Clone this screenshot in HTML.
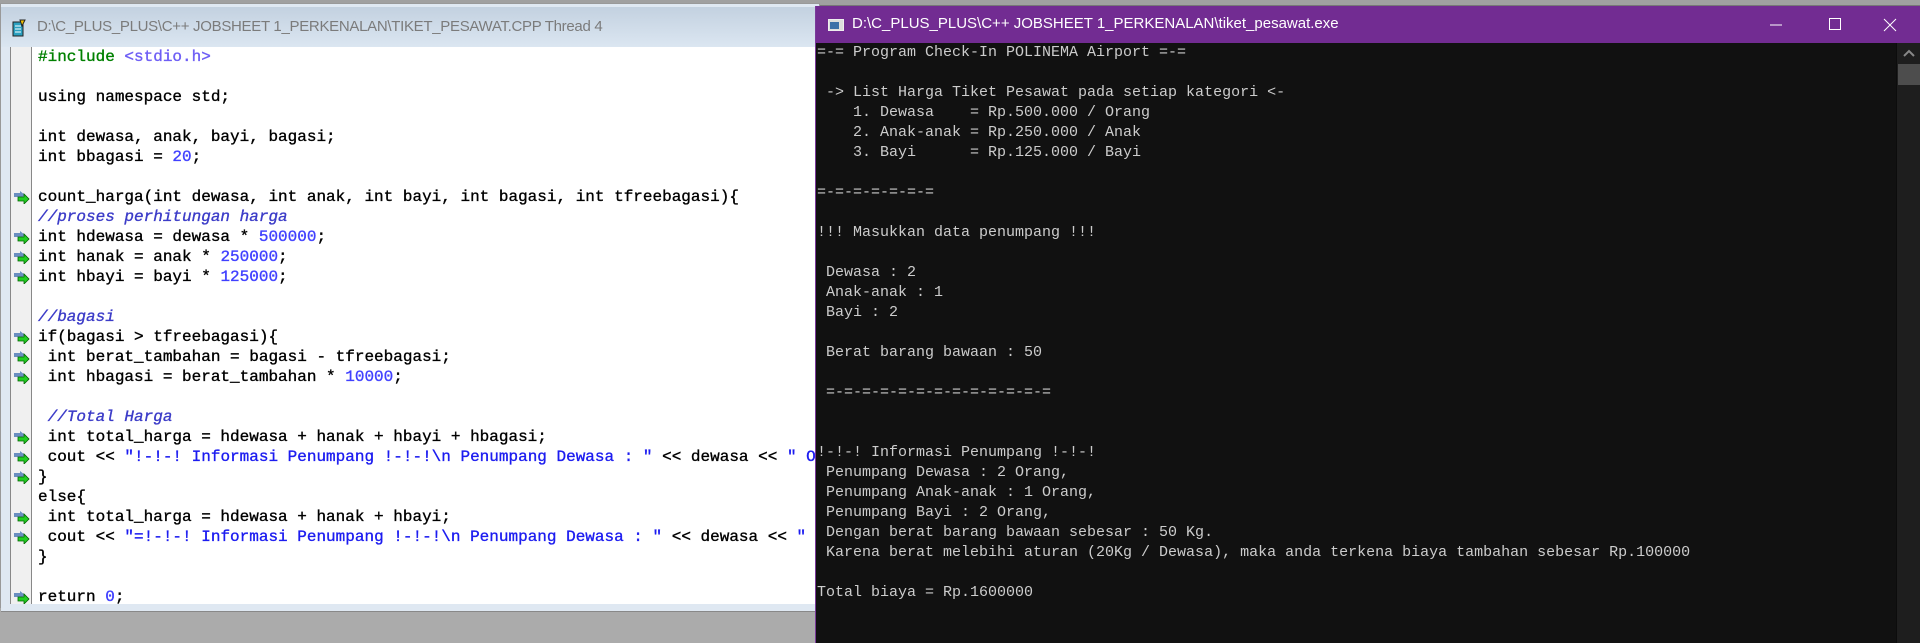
<!DOCTYPE html>
<html><head><meta charset="utf-8"><style>
*{margin:0;padding:0;box-sizing:border-box}
body{width:1920px;height:643px;overflow:hidden;background:#ababab;position:relative;font-family:"Liberation Sans",sans-serif}
#top{position:absolute;left:0;top:0;width:1920px;height:6px;background:#a0a0a0;border-bottom:1px solid #777}
#ed{position:absolute;left:0;top:3px;width:820px;height:605px;background:#dfe8f2;border:1px solid #999}
#edt{position:absolute;left:0;top:3px;width:818px;height:40px;background:linear-gradient(#c3d1e0,#dbe6f1)}
#edt span{position:absolute;left:36px;top:11px;font-size:15px;color:#7b7b7b;letter-spacing:-0.3px}
#code{position:absolute;left:9px;top:43px;width:810px;height:557px;background:#fff;overflow:hidden;border-left:1px solid #888}
#gut{position:absolute;left:0;top:0;width:21px;height:557px;background:#f0f0f0;border-right:1px solid #888}
pre{font-family:"Liberation Mono",monospace}
#code pre{position:absolute;left:27px;top:0;font-size:16px;line-height:20px;color:#000;white-space:pre;-webkit-text-stroke:0.35px}
.pp{color:#008000}.inc{color:#6e5ef5}.n{color:#4040ff}.s{color:#1c1cf0}.c{color:#3c3cc8;font-style:italic}
.ar{position:absolute;left:2px;width:17px;height:14px}
#bar{position:absolute;left:0;top:600px;width:820px;height:8px;background:#dfe8f2;border-bottom:1px solid #888}
#con{position:absolute;left:815px;top:6px;width:1105px;height:637px;background:#0c0c0c;border-left:1px solid #7a3a9a}
#ct{position:absolute;left:0;top:0;width:1105px;height:37px;background:#722c92}
#ct span{position:absolute;left:36px;top:9px;font-size:15px;color:#fff}
#cico{position:absolute;left:12px;top:13px;width:16px;height:12px;background:#ddd;border:1px solid #eee}
#cico:before{content:"";position:absolute;left:1px;top:2px;width:9px;height:7px;background:#3b6fa8}
#cbody{position:absolute;left:0;top:37px;width:1080px;height:600px;background:#111}
#cbody pre{position:absolute;left:1px;top:0;font-size:15px;line-height:20px;color:#cccccc;white-space:pre}
#sb{position:absolute;left:1081px;top:37px;width:24px;height:600px;background:#1e1e1e}
#thumb{position:absolute;left:1px;top:21px;width:22px;height:21px;background:#4d4d4d}
</style></head><body>
<div id="top"></div>
<div id="ed">
<div id="edt"><svg style="position:absolute;left:10px;top:12px" width="16" height="20"><rect x="2" y="3" width="10" height="14" fill="#2aa0c0" stroke="#222"/><path d="M9 1l5 0-3 6z" fill="#f0c000" stroke="#222"/><path d="M4 7h6M4 10h6M4 13h6" stroke="#fff"/></svg><span>D:\C_PLUS_PLUS\C++ JOBSHEET 1_PERKENALAN\TIKET_PESAWAT.CPP Thread 4</span></div>
<div id="code"><div id="gut"></div>
<pre><span class="pp">#include</span> <span class="inc">&lt;stdio.h&gt;</span>

using namespace std;

int dewasa, anak, bayi, bagasi;
int bbagasi = <span class="n">20</span>;

count_harga(int dewasa, int anak, int bayi, int bagasi, int tfreebagasi){
<span class="c">//proses perhitungan harga</span>
int hdewasa = dewasa * <span class="n">500000</span>;
int hanak = anak * <span class="n">250000</span>;
int hbayi = bayi * <span class="n">125000</span>;

<span class="c">//bagasi</span>
if(bagasi &gt; tfreebagasi){
 int berat_tambahan = bagasi - tfreebagasi;
 int hbagasi = berat_tambahan * <span class="n">10000</span>;

 <span class="c">//Total Harga</span>
 int total_harga = hdewasa + hanak + hbayi + hbagasi;
 cout &lt;&lt; <span class="s">"!-!-! Informasi Penumpang !-!-!\n Penumpang Dewasa : "</span> &lt;&lt; dewasa &lt;&lt; <span class="s">" Orang,\n"</span>
}
else{
 int total_harga = hdewasa + hanak + hbayi;
 cout &lt;&lt; <span class="s">"=!-!-! Informasi Penumpang !-!-!\n Penumpang Dewasa : "</span> &lt;&lt; dewasa &lt;&lt; <span class="s">" Orang,\n"</span>
}

return <span class="n">0</span>;
}</pre>
</div>
<div id="bar"></div>
</div>
<div id="con">
<div id="ct"><div id="cico"></div><span>D:\C_PLUS_PLUS\C++ JOBSHEET 1_PERKENALAN\tiket_pesawat.exe</span>
<svg style="position:absolute;left:948px;top:8px" width="150" height="20"><path d="M6 11h12" stroke="#fff"/><rect x="65.5" y="4.5" width="11" height="11" fill="none" stroke="#fff"/><path d="M120 5l12 12M132 5l-12 12" stroke="#fff"/></svg></div>
<div id="cbody"><pre>=-= Program Check-In POLINEMA Airport =-=

 -&gt; List Harga Tiket Pesawat pada setiap kategori &lt;-
    1. Dewasa    = Rp.500.000 / Orang
    2. Anak-anak = Rp.250.000 / Anak
    3. Bayi      = Rp.125.000 / Bayi

=-=-=-=-=-=-=

!!! Masukkan data penumpang !!!

 Dewasa : 2
 Anak-anak : 1
 Bayi : 2

 Berat barang bawaan : 50

 =-=-=-=-=-=-=-=-=-=-=-=-=


!-!-! Informasi Penumpang !-!-!
 Penumpang Dewasa : 2 Orang,
 Penumpang Anak-anak : 1 Orang,
 Penumpang Bayi : 2 Orang,
 Dengan berat barang bawaan sebesar : 50 Kg.
 Karena berat melebihi aturan (20Kg / Dewasa), maka anda terkena biaya tambahan sebesar Rp.100000

Total biaya = Rp.1600000</pre></div>
<div id="sb"><svg style="position:absolute;left:5px;top:5px" width="14" height="10"><path d="M2 8l5-5 5 5" stroke="#888" stroke-width="2" fill="none"/></svg><div id="thumb"></div></div>
</div>
<script>
var g=document.getElementById('gut');var rows=[7,9,10,11,14,15,16,19,20,21,23,24,27];
var h='';rows.forEach(function(r){h+='<svg class="ar" style="top:'+(r*20+3)+'px" viewBox="0 0 17 14"><path d="M1 3h6v-2l5 4-5 4v-2h-6z" fill="#6a8fc0"/><path d="M5 7h6v-3l5 5-5 5v-3h-6z" fill="#2c2" stroke="#060" stroke-width=".8"/></svg>';});g.innerHTML=h;
</script>
</body></html>
